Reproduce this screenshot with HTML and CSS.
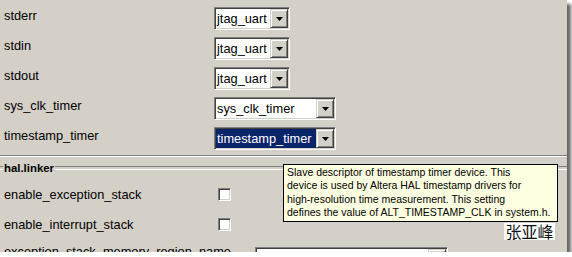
FILE: index.html
```html
<!DOCTYPE html>
<html lang="en">
<head>
<meta charset="UTF-8" />
<title>BSP settings</title>
<link rel="stylesheet" href="styles.css">
</head>
<body>

<div class="panel">
  <div class="list">
    <div class="row">
      <div class="label">stderr</div>
      <div class="combo small"><span class="value">jtag_uart</span><span class="btn"><svg width="7" height="4" viewBox="0 0 7 4"><polygon points="0,0 7,0 3.5,4" fill="#000"/></svg></span></div>
    </div>
    <div class="row">
      <div class="label">stdin</div>
      <div class="combo small"><span class="value">jtag_uart</span><span class="btn"><svg width="7" height="4" viewBox="0 0 7 4"><polygon points="0,0 7,0 3.5,4" fill="#000"/></svg></span></div>
    </div>
    <div class="row">
      <div class="label">stdout</div>
      <div class="combo small"><span class="value">jtag_uart</span><span class="btn"><svg width="7" height="4" viewBox="0 0 7 4"><polygon points="0,0 7,0 3.5,4" fill="#000"/></svg></span></div>
    </div>
    <div class="row">
      <div class="label">sys_clk_timer</div>
      <div class="combo wide"><span class="value">sys_clk_timer</span><span class="btn"><svg width="7" height="4" viewBox="0 0 7 4"><polygon points="0,0 7,0 3.5,4" fill="#000"/></svg></span></div>
    </div>
    <div class="row">
      <div class="label">timestamp_timer</div>
      <div class="combo wide"><span class="value selected">timestamp_timer</span><span class="btn"><svg width="7" height="4" viewBox="0 0 7 4"><polygon points="0,0 7,0 3.5,4" fill="#000"/></svg></span></div>
    </div>
  </div>

  <div class="separator"></div>

  <div class="group">
    <div class="group-title"><span>hal.linker</span></div>
    <div class="crow">
      <div class="label">enable_exception_stack</div>
      <div class="check"></div>
    </div>
    <div class="crow">
      <div class="label">enable_interrupt_stack</div>
      <div class="check"></div>
    </div>
    <div class="crow last">
      <div class="label">exception_stack_memory_region_name</div>
      <div class="combo region"><span class="value"></span><span class="btn"><svg width="7" height="4" viewBox="0 0 7 4"><polygon points="0,0 7,0 3.5,4" fill="#000"/></svg></span></div>
    </div>
  </div>

  <!-- tooltip over the group -->
  <div class="tooltip">
    Slave descriptor of timestamp timer device. This<br>
    device is used by Altera HAL timestamp drivers for<br>
    high-resolution time measurement. This setting<br>
    defines the value of ALT_TIMESTAMP_CLK in system.h.
  </div>

  <div class="mark">张亚峰</div>
</div>

</body>
</html>
```

FILE: styles.css
```css
* {
  box-sizing: border-box;
}
body {
  margin: 0;
  background: #fff;
}

.panel {
  position: relative;
  width: 567px;
  height: 252px;
  overflow: hidden;
  background: #d4d0c8;
  color: #000;
  font-family: "Liberation Sans", Arial, sans-serif;
  font-size: 12.8px;
  box-shadow: 4px 4px 3px rgba(0,0,0,0.6);
}

/* top list of combo rows */
.list {
  padding-top: 7px;
}
.row {
  display: flex;
  height: 30px;
}
.row:last-child {
  height: 28px;
}
.label {
  width: 214px;
  padding-left: 4px;
  padding-top: 1px;
  line-height: 16px;
  white-space: nowrap;
}

/* combo box */
.combo {
  display: flex;
  height: 23px;
  background: #fff;
  border: 1px solid;
  border-color: #808080 #fff #fff #808080;
  box-shadow: inset 1px 1px #404040, inset -1px -1px #d4d0c8;
  padding: 1px;
}
.combo.small {
  width: 76px;
}
.combo.wide {
  width: 122px;
}
.combo .value {
  flex: 1;
  padding-left: 1px;
  line-height: 20px;
  white-space: nowrap;
  overflow: hidden;
}
.combo .value.selected {
  background: #0a246a;
  color: #fff;
}
.combo .btn {
  width: 18px;
  height: 19px;
  display: flex;
  align-items: center;
  justify-content: center;
  background: #d4d0c8;
  border: 1px solid;
  border-color: #d4d0c8 #404040 #404040 #d4d0c8;
  box-shadow: inset 1px 1px #fff, inset -1px -1px #808080;
}
.combo .btn svg {
  display: block;
}

.separator {
  height: 2px;
  border-top: 1px solid #808080;
  border-bottom: 1px solid #fff;
}

/* hal.linker group */
.group-title {
  display: flex;
  align-items: center;
  padding-top: 3px;
  line-height: 16px;
  margin-bottom: 4px;
}
.group-title::before,
.group-title::after {
  content: "";
  height: 2px;
  border-top: 1px solid #808080;
  border-bottom: 1px solid #fff;
}
.group-title::before {
  width: 3px;
  margin-right: 1px;
}
.group-title::after {
  flex: 1;
  margin-left: 1px;
}
.group-title span {
  font-weight: bold;
  font-size: 11.4px;
}

.crow {
  display: flex;
  height: 30px;
}
.crow .label {
  width: 218px;
  padding-top: 7px;
}
.crow.last .label {
  width: 255px;
  padding-top: 4px;
}
.check {
  width: 13px;
  height: 13px;
  margin-top: 8px;
  background: #fff;
  border: 1px solid;
  border-color: #808080 #fff #fff #808080;
  box-shadow: inset 1px 1px #404040, inset -1px -1px #d4d0c8;
}
.combo.region {
  width: 193px;
  margin-top: 7px;
}

.tooltip {
  position: absolute;
  left: 283px;
  top: 164px;
  width: 275px;
  height: 58px;
  padding: 1px 3px;
  background: #ffffe1;
  border: 1px solid #000;
  font-size: 10.5px;
  line-height: 13.4px;
  white-space: nowrap;
}

.mark {
  position: absolute;
  left: 504px;
  top: 223px;
  width: 51px;
  height: 17px;
  background: #fff;
  color: #111;
  font-family: "Noto Sans CJK SC", sans-serif;
  font-size: 16px;
  line-height: 17px;
  text-align: center;
}
```
